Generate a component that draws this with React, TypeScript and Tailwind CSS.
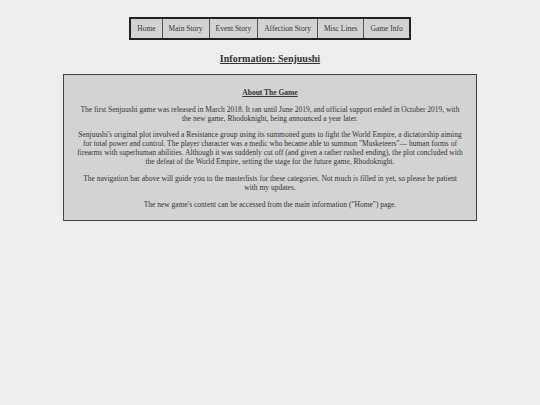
import React from 'react';

const navItems = ['Home', 'Main Story', 'Event Story', 'Affection Story', 'Misc Lines', 'Game Info'];

export default function App() {
    return (
        <div className="min-h-[405px] bg-[#eeeeee] pt-[17px] text-[#333333] antialiased font-['Liberation_Serif',serif]">
            <nav className="flex justify-center">
                <ul className="flex border-2 border-[#222222] bg-[#d3d3d3]">
                    {navItems.map((label, i) => (
                        <li
                            key={label}
                            className={`px-[6px] py-[5px] text-[7.5px] leading-[9px] ${i > 0 ? 'border-l border-[#555555]' : ''}`}
                        >
                            {label}
                        </li>
                    ))}
                </ul>
            </nav>

            <h1 className="mt-[12px] text-center text-[10px] leading-[14px] font-bold underline">
                Information: Senjuushi
            </h1>

            <div className="mx-auto mt-[8px] w-[414px] border border-[#444444] bg-[#d3d3d3] px-[12px] pt-[13px] pb-[11px] text-center text-[7.5px] leading-[9px]">
                <h2 className="mb-[8px] font-bold underline">About The Game</h2>
                <p className="mb-[7px]">
                    The first Senjuushi game was released in March 2018. It ran until June 2019, and official support ended in October 2019, with the new game, Rhodoknight, being announced a year later.
                </p>
                <p className="mb-[8px]">
                    Senjuushi's original plot involved a Resistance group using its summoned guns to fight the World Empire, a dictatorship aiming for total power and control. The player character was a medic who became able to summon "Musketeers"— human forms of firearms with superhuman abilities. Although it was suddenly cut off (and given a rather rushed ending), the plot concluded with the defeat of the World Empire, setting the stage for the future game, Rhodoknight.
                </p>
                <p className="mb-[8px]">
                    The navigation bar above will guide you to the masterlists for these categories. Not much is filled in yet, so please be patient with my updates.
                </p>
                <p>The new game's content can be accessed from the main information ("Home") page.</p>
            </div>
        </div>
    );
}
